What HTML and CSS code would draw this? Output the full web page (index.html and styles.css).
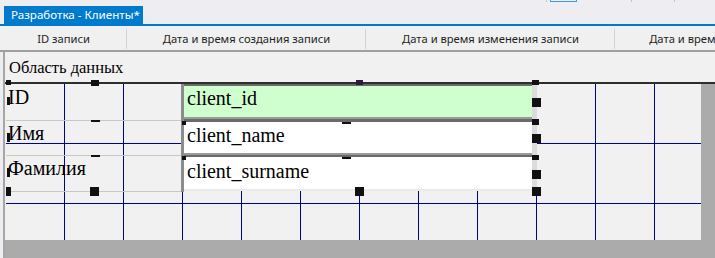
FILE: index.html
```html
<!DOCTYPE html>
<html>
<head>
    <title>Разработка - Клиенты</title>
    <link rel="stylesheet" href="styles.css">
</head>
<body>
    <div class="doc-bar">
        <div class="doc-tab">Разработка - Клиенты*</div>
        <div class="doc-tools">
            <span class="tool-tick"></span>
            <span class="tool-box"></span>
            <span class="tool-gap"></span>
            <span class="tool-tick"></span>
            <span class="tool-gap small"></span>
            <span class="tool-tick"></span>
        </div>
    </div>

    <div class="col-head">
        <div class="col-cell c1">ID записи</div>
        <div class="col-cell c2">Дата и время создания записи</div>
        <div class="col-cell c3">Дата и время изменения записи</div>
        <div class="col-cell c4">Дата и время удаления записи</div>
    </div>

    <div class="designer">
        <div class="section-bar">Область данных</div>
        <div class="canvas-area">
            <div class="canvas">
                <div class="controls">
                    <div class="labels">
                        <div class="lbl r1">ID</div>
                        <div class="lbl r2">Имя</div>
                        <div class="lbl r3">Фамилия</div>
                    </div>
                    <div class="fields">
                        <div class="fld f1">client_id</div>
                        <div class="fld f2">client_name</div>
                        <div class="fld f3">client_surname</div>
                    </div>
                </div>

                <!-- selection handles of the two control groups -->
                <span class="hnd" style="left:0;top:-4px;width:5px;height:5px"></span>
                <span class="hnd" style="left:85px;top:-4px;width:8px;height:6px"></span>
                <span class="hnd" style="left:1px;top:13px;width:3px;height:8px"></span>
                <span class="hnd" style="left:1px;top:49px;width:3px;height:9px"></span>
                <span class="hnd" style="left:1px;top:84px;width:3px;height:9px"></span>
                <span class="hnd" style="left:0;top:103px;width:5px;height:9px"></span>
                <span class="hnd" style="left:84px;top:103px;width:9px;height:9px"></span>
                <span class="dash" style="left:85px;top:36px"></span>
                <span class="dash" style="left:85px;top:71px"></span>

                <span class="hnd purple" style="left:350px;top:-4px;width:7px;height:5px"></span>
                <span class="hnd" style="left:526px;top:-4px;width:7px;height:5px"></span>
                <span class="hnd" style="left:526px;top:14px;width:9px;height:9px"></span>
                <span class="hnd" style="left:526px;top:35px;width:7px;height:6px"></span>
                <span class="hnd" style="left:526px;top:50px;width:9px;height:9px"></span>
                <span class="hnd" style="left:526px;top:71px;width:7px;height:5px"></span>
                <span class="hnd" style="left:526px;top:86px;width:9px;height:9px"></span>
                <span class="hnd" style="left:526px;top:103px;width:9px;height:9px"></span>
                <span class="hnd" style="left:349px;top:103px;width:9px;height:9px"></span>
                <span class="hnd" style="left:176px;top:37px;width:4px;height:4px"></span>
                <span class="hnd" style="left:176px;top:72px;width:4px;height:4px"></span>
                <span class="dash" style="left:336px;top:38px"></span>
                <span class="dash" style="left:336px;top:73px"></span>
            </div>
        </div>
    </div>
</body>
</html>
```

FILE: styles.css
```css
body {
    margin: 0;
    width: 715px;
    height: 258px;
    overflow: hidden;
    background-color: #eeeef2;
    font-family: "Noto Sans", Arial, sans-serif;
}
.doc-bar {
    position: relative;
    height: 24px;
    border-bottom: 2px solid #007acc;
    display: flex;
    align-items: flex-end;
}
.doc-tab {
    margin-left: 4px;
    width: 139px;
    height: 18px;
    box-sizing: border-box;
    padding-left: 7px;
    background-color: #007acc;
    color: white;
    font-size: 11.6px;
    line-height: 18px;
    white-space: nowrap;
}
.doc-tools {
    position: absolute;
    top: 0;
    left: 546px;
    display: flex;
    height: 2px;
}
.tool-tick {
    width: 1px;
    height: 2px;
    background-color: #c4c4c8;
}
.tool-box {
    margin-left: 3px;
    width: 25px;
    height: 1px;
    border: 1px solid #3d9be9;
    border-top: none;
}
.tool-gap {
    width: 54px;
}
.tool-gap.small {
    width: 42px;
}
.col-head {
    display: flex;
    height: 24px;
    background-color: #f0f0f0;
    border-bottom: 2px solid #a0a0a0;
    overflow: hidden;
    white-space: nowrap;
}
.col-cell {
    flex: none;
    display: flex;
    align-items: center;
    justify-content: center;
    font-size: 11.2px;
    color: #1e1e1e;
    position: relative;
}
.col-cell::after {
    content: "";
    position: absolute;
    right: 0;
    top: 3px;
    bottom: 1px;
    width: 1px;
    background-color: #d2d2d2;
}
.c1 { width: 127px; }
.c2 { width: 239px; }
.c3 { width: 249px; }
.c4 { width: 236px; }
.designer {
    margin-left: 3px;
    border-left: 2px solid #a6a6a6;
    height: 206px;
    display: flex;
    flex-direction: column;
}
.section-bar {
    height: 24px;
    padding: 6px 0 0 4px;
    background-color: #f1f1f1;
    border-bottom: 2px solid #2e2e2e;
    font-family: "Liberation Serif", "Times New Roman", serif;
    font-size: 16.5px;
    color: #000;
}
.canvas-area {
    flex: 1;
    background-color: #ababab;
}
.canvas {
    position: relative;
    width: 695px;
    height: 156px;
    border-left: 1px solid #f1f1f1;
    background-color: #f1f1f1;
    background-image:
        repeating-linear-gradient(to right, transparent 0 58px, #00009c 58px 59px),
        repeating-linear-gradient(to bottom, transparent 0 59px, #00009c 59px 60px);
}
.controls {
    display: flex;
    font-family: "Liberation Serif", "Times New Roman", serif;
    font-size: 20px;
    color: #000;
}
.labels {
    width: 175px;
}
.lbl {
    box-sizing: border-box;
    padding: 1px 0 0 2px;
    border-bottom: 1px solid #c8c8c8;
    line-height: 23px;
}
.lbl.r1 { height: 37px; padding-top: 2px; }
.lbl.r2 { height: 35px; }
.lbl.r3 { height: 36px; }
.fields {
    width: 348px;
    border-left: 3px solid #8c8c8c;
    border-right: 5px solid #dcdcdc;
}
.fld {
    background-color: white;
    padding: 1px 0 0 3px;
    line-height: 23px;
    box-sizing: border-box;
}
.fld.f1 {
    height: 35px;
    background-color: #cfffcf;
    border-top: 2px solid #6a6a6a;
    border-bottom: 2px solid #9a9a9a;
}
.fld.f2 {
    height: 36px;
    padding-top: 2px;
    border-top: 3px solid #6a6a6a;
    border-bottom: 2px solid #9a9a9a;
}
.fld.f3 {
    height: 36px;
    padding-top: 3px;
    border-top: 2px solid #6a6a6a;
    border-bottom: 2px solid #ebebeb;
}
.hnd {
    position: absolute;
    background-color: #111;
}
.hnd.purple {
    background-color: #2b1c3c;
}
.dash {
    position: absolute;
    width: 9px;
    height: 2px;
    background-color: #111;
}
```
